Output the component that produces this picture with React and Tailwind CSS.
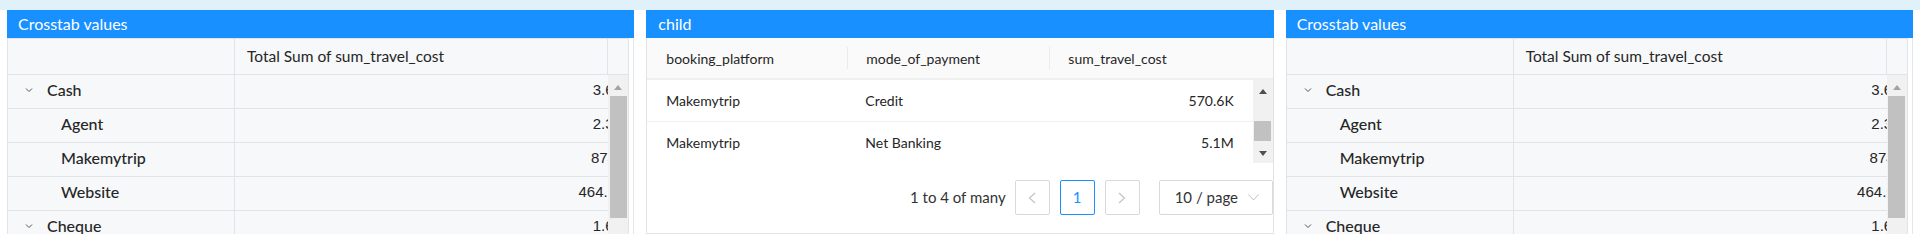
import React from "react";

const FONT = { fontFamily: "Lato, 'Open Sans', sans-serif" };
const ARIAL = { fontFamily: "'Liberation Sans', Arial, sans-serif" };

function Chevron() {
  return (
    <svg width="8" height="6" viewBox="0 0 8 6" className="shrink-0">
      <polyline points="1,1.5 4,4.5 7,1.5" fill="none" stroke="#555" strokeWidth="1" />
    </svg>
  );
}

function TriUp({ color }) {
  return (
    <svg width="8" height="5" viewBox="0 0 8 5">
      <polygon points="0,5 8,5 4,0" fill={color} />
    </svg>
  );
}
function TriDown({ color }) {
  return (
    <svg width="8" height="5" viewBox="0 0 8 5">
      <polygon points="0,0 8,0 4,5" fill={color} />
    </svg>
  );
}

const crossRows = [
  { label: "Cash", value: "3.6M", level: 0 },
  { label: "Agent", value: "2.3M", level: 1 },
  { label: "Makemytrip", value: "874K", level: 1 },
  { label: "Website", value: "464.5K", level: 1 },
  { label: "Cheque", value: "1.6M", level: 0 },
];

function PanelHeader({ title, pad }) {
  return (
    <div className={`h-[28px] shrink-0 bg-[#1890ff] text-white text-[16px] flex items-center ${pad}`}>
      {title}
    </div>
  );
}

function Crosstab() {
  return (
    <div className="flex flex-col h-[224px] min-w-0" style={FONT}>
      <PanelHeader title="Crosstab values" pad="pl-[11px]" />
      <div className="flex-1 min-h-0 flex border-r border-[#e4e6e9]">
        <div className="w-[622px] h-full flex flex-col border-l border-r border-t border-[#e1e3e6] bg-[#f7f8fa] overflow-hidden text-[#262626]">
          <div className="h-[36px] shrink-0 flex border-b border-[#e1e3e6]">
            <div className="w-[227px] shrink-0 border-r border-[#e1e3e6]" />
            <div className="flex-1 border-r border-[#e1e3e6] flex items-center pl-[12px] text-[15.5px]">
              Total Sum of sum_travel_cost
            </div>
            <div className="w-[20px] shrink-0" />
          </div>
          <div className="flex-1 min-h-0 flex overflow-hidden">
            <div className="flex-1 min-w-0 flex flex-col">
              {crossRows.map((r) => (
                <div key={r.label} className="h-[34px] shrink-0 flex border-b border-[#e1e3e6]">
                  <div
                    className={`w-[227px] shrink-0 border-r border-[#e1e3e6] flex items-center pb-[3px] text-[16px] font-medium ${
                      r.level === 0 ? "pl-[17px] gap-[14px]" : "pl-[53px]"
                    }`}
                  >
                    {r.level === 0 && <Chevron />}
                    <span>{r.label}</span>
                  </div>
                  <div className="flex-1 min-w-0 overflow-hidden flex items-center pb-[2px]">
                    <div className="flex-1 min-w-0 mr-[-19px] text-right text-[15px] pr-[1px] whitespace-nowrap" style={ARIAL}>
                      {r.value}
                    </div>
                  </div>
                </div>
              ))}
            </div>
            <div className="w-[20px] shrink-0 bg-[#f1f1f1] flex flex-col items-center">
              <div className="h-[21px] flex items-center justify-center pt-[3px]">
                <TriUp color="#a3a3a3" />
              </div>
              <div className="w-[17px] h-[122px] bg-[#c1c1c1]" />
            </div>
          </div>
        </div>
      </div>
    </div>
  );
}

function ChildTable() {
  const rows = [
    ["Makemytrip", "Credit", "570.6K"],
    ["Makemytrip", "Net Banking", "5.1M"],
  ];
  return (
    <div className="flex flex-col h-[224px] min-w-0" style={FONT}>
      <PanelHeader title="child" pad="pl-[12px]" />
      <div className="flex-1 min-h-0 flex flex-col border-l border-r border-b border-[#e3e3e3] text-[#262626]">
        <div className="h-[42px] shrink-0 flex items-center bg-[#fafafa] border-b-2 border-[#f0f0f0] text-[14px]">
          <div className="w-[200px] shrink-0 pl-[19px]">booking_platform</div>
          <div className="w-px h-[22px] bg-[#ebebeb]" />
          <div className="w-[201px] shrink-0 pl-[18px]">mode_of_payment</div>
          <div className="w-px h-[22px] bg-[#ebebeb]" />
          <div className="flex-1 pl-[18px]">sum_travel_cost</div>
        </div>
        <div className="h-[83px] shrink-0 flex overflow-hidden">
          <div className="flex-1 min-w-0 flex flex-col text-[14px]">
            {rows.map((r, i) => (
              <div key={i} className="h-[42px] shrink-0 flex items-center border-b border-[#f0f0f0]">
                <div className="w-[200px] shrink-0 pl-[19px]">{r[0]}</div>
                <div className="w-[202px] shrink-0 pl-[18px]">{r[1]}</div>
                <div className="flex-1 text-right pr-[19px]">{r[2]}</div>
              </div>
            ))}
          </div>
          <div className="w-[20px] shrink-0 bg-[#f1f1f1] flex flex-col items-center">
            <div className="h-[21px] flex items-center justify-center pt-[2px]">
              <TriUp color="#505050" />
            </div>
            <div className="h-[20px] mt-[20px] w-[17px] bg-[#c1c1c1]" />
            <div className="h-[22px] flex items-center justify-center pt-[2px]">
              <TriDown color="#505050" />
            </div>
          </div>
        </div>
        <div className="flex-1 flex items-center justify-end pb-[1px] text-[15px]">
          <span className="mr-[9px] text-[#333]">1 to 4 of many</span>
          <div className="w-[35px] h-[35px] border border-[#d9d9d9] rounded-[2px] flex items-center justify-center">
            <svg width="8" height="12" viewBox="0 0 8 12">
              <polyline points="7,1 1.5,6 7,11" fill="none" stroke="#c4c4c4" strokeWidth="1.2" />
            </svg>
          </div>
          <div className="ml-[10px] w-[35px] h-[35px] border border-[#1890ff] rounded-[2px] flex items-center justify-center text-[#1890ff]">
            1
          </div>
          <div className="ml-[10px] w-[35px] h-[35px] border border-[#d9d9d9] rounded-[2px] flex items-center justify-center">
            <svg width="8" height="12" viewBox="0 0 8 12">
              <polyline points="1,1 6.5,6 1,11" fill="none" stroke="#c4c4c4" strokeWidth="1.2" />
            </svg>
          </div>
          <div className="ml-[19px] w-[114px] h-[35px] border border-[#d9d9d9] rounded-[2px] flex items-center justify-between pl-[15px] pr-[13px] text-[#333]">
            <span>10 / page</span>
            <svg width="11" height="7" viewBox="0 0 11 7">
              <polyline points="0.5,0.5 5.5,6 10.5,0.5" fill="none" stroke="#bfbfbf" strokeWidth="1" />
            </svg>
          </div>
        </div>
      </div>
    </div>
  );
}

export default function App() {
  return (
    <div className="w-[1920px] h-[250px] bg-white flex flex-col overflow-hidden">
      <div className="h-[10px] shrink-0 bg-[#e1f1fa]" />
      <div className="grid grid-cols-3 gap-x-[12px] px-[7px]">
        <Crosstab />
        <ChildTable />
        <Crosstab />
      </div>
    </div>
  );
}
